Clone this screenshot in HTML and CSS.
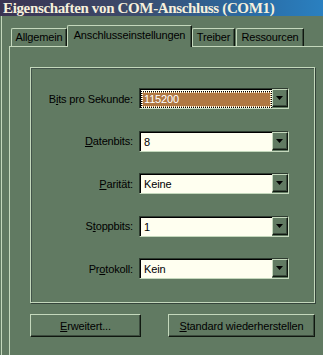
FILE: index.html
```html
<!DOCTYPE html>
<html>
	<head>
		<meta charset="utf-8">
		<title>Eigenschaften von COM-Anschluss (COM1)</title>
		<link rel="stylesheet" href="styles.css">
	</head>
	<body>
		<div class="titlebar">Eigenschaften von COM-Anschluss (COM1)</div>

		<div class="frame">
			<div class="tabs">
				<div class="tab tab-allg">Allgemein</div>
				<div class="tab tab-port active">Anschlusseinstellungen</div>
				<div class="tab tab-drv">Treiber</div>
				<div class="tab tab-res">Ressourcen</div>
			</div>

			<div class="page">
				<div class="group">
					<div class="label">B<u>i</u>ts pro Sekunde:</div>
					<div class="combo">
						<div class="field"><span class="sel">115200</span></div>
						<div class="drop"><svg width="7" height="4" viewBox="0 0 7 4"><polygon points="0,0 7,0 3.5,4" fill="#000"/></svg></div>
					</div>

					<div class="label"><u>D</u>atenbits:</div>
					<div class="combo">
						<div class="field"><span class="val">8</span></div>
						<div class="drop"><svg width="7" height="4" viewBox="0 0 7 4"><polygon points="0,0 7,0 3.5,4" fill="#000"/></svg></div>
					</div>

					<div class="label"><u>P</u>arität:</div>
					<div class="combo">
						<div class="field"><span class="val">Keine</span></div>
						<div class="drop"><svg width="7" height="4" viewBox="0 0 7 4"><polygon points="0,0 7,0 3.5,4" fill="#000"/></svg></div>
					</div>

					<div class="label">S<u>t</u>oppbits:</div>
					<div class="combo">
						<div class="field"><span class="val">1</span></div>
						<div class="drop"><svg width="7" height="4" viewBox="0 0 7 4"><polygon points="0,0 7,0 3.5,4" fill="#000"/></svg></div>
					</div>

					<div class="label">Pr<u>o</u>tokoll:</div>
					<div class="combo">
						<div class="field"><span class="val">Kein</span></div>
						<div class="drop"><svg width="7" height="4" viewBox="0 0 7 4"><polygon points="0,0 7,0 3.5,4" fill="#000"/></svg></div>
					</div>
				</div>

				<div class="buttons">
					<button type="button" class="btn btn-adv"><u>E</u>rweitert...</button>
					<button type="button" class="btn btn-std"><u>S</u>tandard wiederherstellen</button>
				</div>
			</div>
		</div>
	</body>
</html>
```

FILE: styles.css
```css
body {
	margin: 0;
	width: 323px;
	height: 355px;
	overflow: hidden;
	background-color: #617a62;
	font-family: "Liberation Sans", Arial, sans-serif;
	font-size: 11px;
	letter-spacing: -0.15px;
	color: #000;
}

u {
	text-decoration: underline;
	text-underline-offset: 1px;
}

.titlebar {
	height: 16px;
	padding-left: 3px;
	background: linear-gradient(to right, #3a3352, #3c4a6a 40%, #2a6ea8 80%, #2a80c0);
	color: #f6f0dc;
	font-family: "Liberation Serif", "Times New Roman", serif;
	font-weight: bold;
	font-size: 15px;
	letter-spacing: -0.35px;
	line-height: 16px;
	white-space: nowrap;
}

.frame {
	margin-left: 1px;
	padding-left: 7px;
	border-left: 1px solid #c4d8bc;
	height: 339px;
}

/* tab strip */
.tabs {
	display: flex;
	align-items: flex-end;
	height: 21px;
	padding: 9px 0 0 2px;
}

.tab {
	box-sizing: border-box;
	height: 18px;
	border-top: 1px solid #c4d8bc;
	border-left: 1px solid #c4d8bc;
	border-right: 1px solid #101810;
	border-top-left-radius: 2px;
	border-top-right-radius: 1px;
	box-shadow: inset -1px 0 0 #3c4c3e;
	text-align: center;
	line-height: 16px;
	white-space: nowrap;
}

.tab.active {
	position: relative;
	height: 22px;
	margin-bottom: -1px;
	background-color: #617a62;
	line-height: 18px;
}

.tab-allg { width: 56px; }
.tab-port { width: 125px; }
.tab-drv { width: 43px; }
.tab-res { width: 68px; margin-left: 1px; }

.page {
	border-top: 1px solid #c4d8bc;
	border-left: 1px solid #c4d8bc;
	padding: 20px 0 0 20px;
	height: 288px;
}

/* group box with the five drop-downs */
.group {
	box-sizing: border-box;
	width: 285px;
	height: 236px;
	border: 1px solid #c4d8bc;
	box-shadow: 1px 1px 0 #34443a, inset 1px 1px 0 #42544a;
	padding: 20px 0 0 0;
	display: grid;
	grid-template-columns: 102px 150px;
	grid-auto-rows: 21px;
	column-gap: 6px;
	row-gap: 21.6px;
	align-content: start;
}

.label {
	text-align: right;
	align-self: center;
	white-space: nowrap;
}

.combo {
	box-sizing: border-box;
	display: flex;
	height: 21px;
	border: 1px solid;
	border-color: #2e3c30 #c4d8bc #c4d8bc #2e3c30;
	box-shadow: inset 1px 1px 0 #000;
	padding: 1px 0 0 1px;
}

.field {
	flex: 1;
	background-color: #fffff0;
	padding: 1px;
	display: flex;
	align-items: center;
}

.val {
	padding-left: 2px;
}

.sel {
	flex: 1;
	height: 13px;
	line-height: 13px;
	padding-left: 1px;
	background-color: #b07842;
	color: #fff;
	outline: 1px dotted #000;
	outline-offset: 0;
	border: 1px dotted #fffff0;
}

.drop {
	box-sizing: border-box;
	width: 16px;
	height: 18px;
	margin-top: -1px;
	border: 1px solid;
	border-color: #c4d8bc #101810 #101810 #c4d8bc;
	box-shadow: inset -1px -1px 0 #3c4c3e;
	background-color: #617a62;
	display: flex;
	align-items: center;
	justify-content: center;
}

.drop svg {
	display: block;
	margin-left: -1px;
}

/* bottom buttons */
.buttons {
	display: flex;
	justify-content: space-between;
	width: 285px;
	margin-top: 11px;
}

.btn {
	box-sizing: border-box;
	height: 23px;
	border: 1px solid;
	border-color: #c4d8bc #101810 #101810 #c4d8bc;
	box-shadow: inset -1px -1px 0 #3c4c3e;
	background-color: #617a62;
	font-family: "Liberation Sans", Arial, sans-serif;
	font-size: 11px;
	letter-spacing: -0.15px;
	color: #000;
	padding: 0;
}

.btn-adv { width: 111px; }
.btn-std { width: 147px; }
```
